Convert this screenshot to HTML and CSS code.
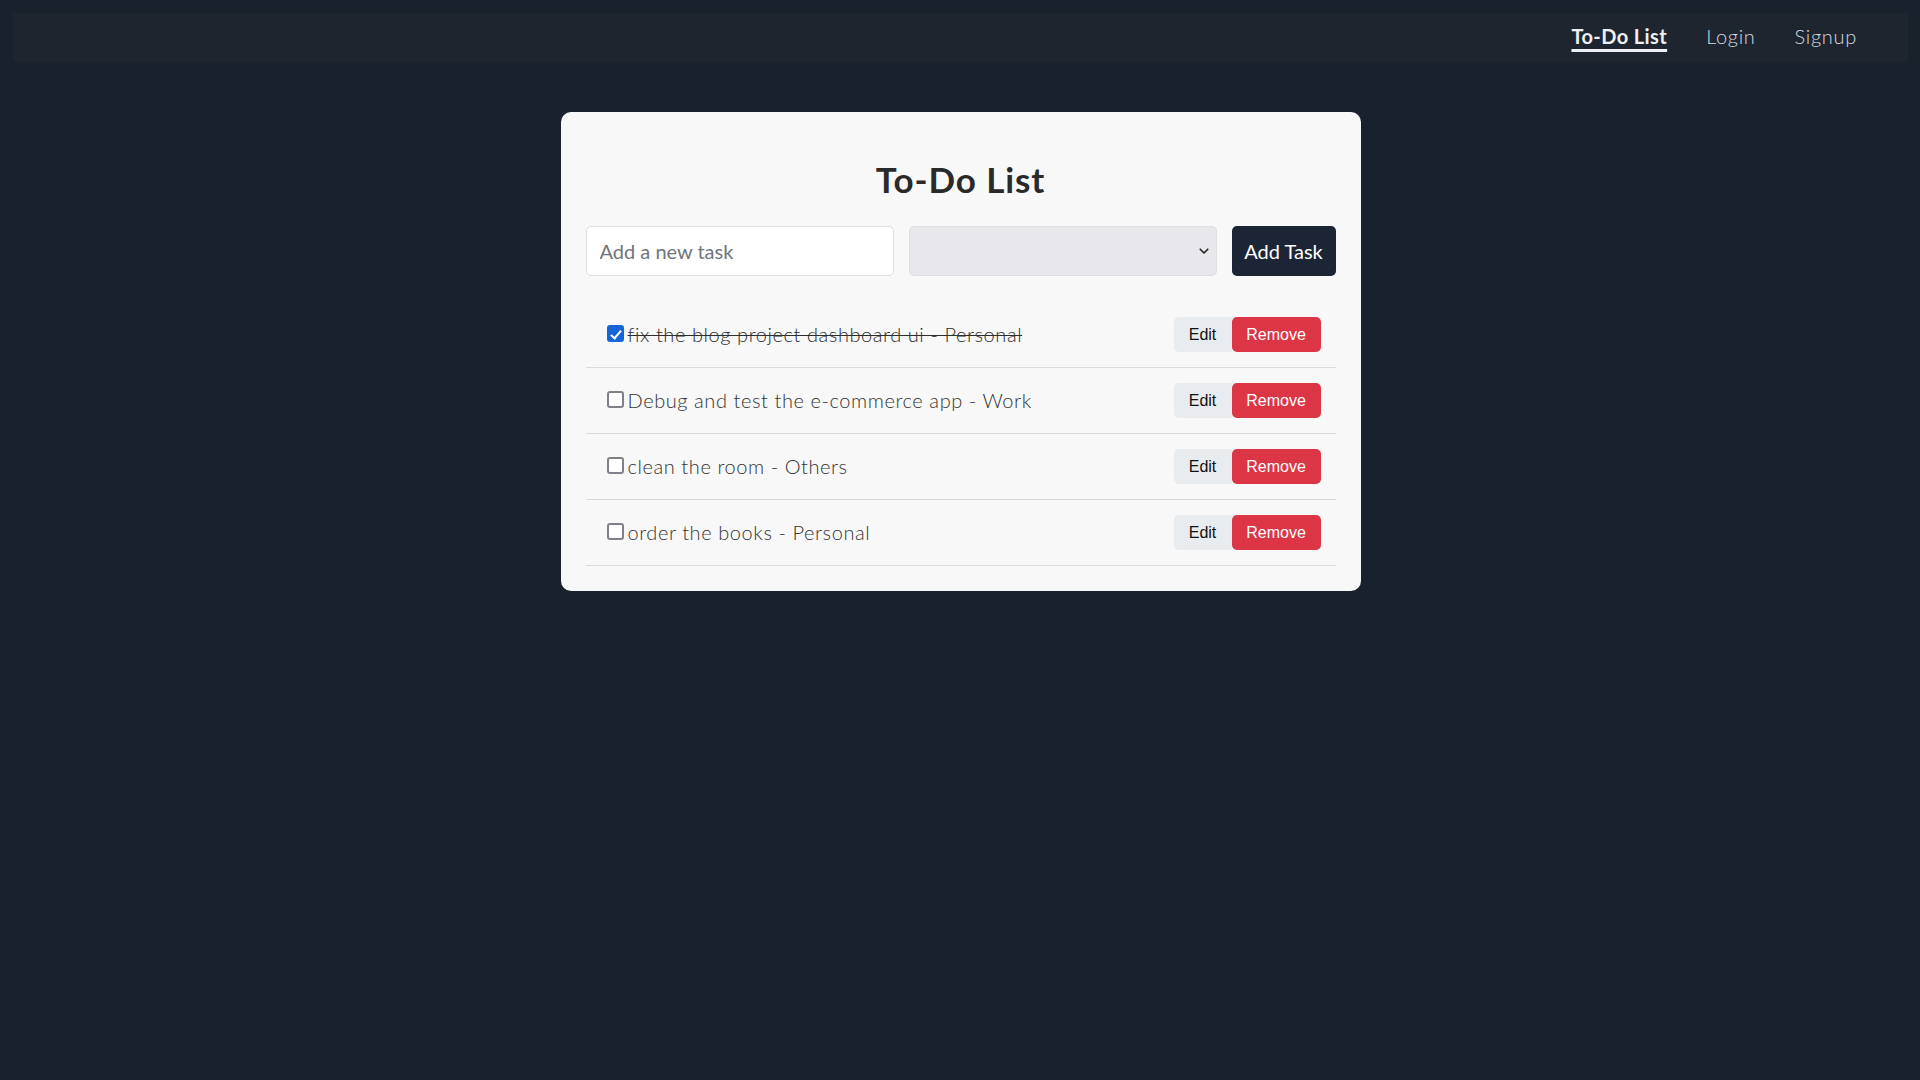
FILE: index.html
```html
<!DOCTYPE html>
<html lang="en">
<head>
<meta charset="utf-8">
<title>To-Do List</title>
<link rel="stylesheet" href="styles.css">
</head>
<body>
<nav class="navbar">
  <a class="nav-link active" href="#">To-Do List</a>
  <a class="nav-link" href="#">Login</a>
  <a class="nav-link" href="#">Signup</a>
</nav>
<main class="card">
  <h1 class="title">To-Do List</h1>
  <form class="add-form">
    <input class="task-input" type="text" placeholder="Add a new task">
    <div class="select-wrap">
      <select class="category-select">
        <option></option>
        <option>Personal</option>
        <option>Work</option>
        <option>Others</option>
      </select>
      <svg class="chevron" width="10" height="7" viewBox="0 0 10 7"><path d="M1.2 1.2 L5 5 L8.8 1.2" fill="none" stroke="#222" stroke-width="1.6" stroke-linecap="round" stroke-linejoin="round"/></svg>
    </div>
    <button class="add-btn" type="button">Add Task</button>
  </form>
  <ul class="task-list">
    <li class="task">
      <label class="task-label"><input class="check" type="checkbox" checked><span class="task-text done">fix the blog project dashboard ui - Personal</span></label>
      <div class="actions"><button class="btn edit" type="button">Edit</button><button class="btn remove" type="button">Remove</button></div>
    </li>
    <li class="task">
      <label class="task-label"><input class="check" type="checkbox"><span class="task-text">Debug and test the e-commerce app - Work</span></label>
      <div class="actions"><button class="btn edit" type="button">Edit</button><button class="btn remove" type="button">Remove</button></div>
    </li>
    <li class="task">
      <label class="task-label"><input class="check" type="checkbox"><span class="task-text">clean the room - Others</span></label>
      <div class="actions"><button class="btn edit" type="button">Edit</button><button class="btn remove" type="button">Remove</button></div>
    </li>
    <li class="task">
      <label class="task-label"><input class="check" type="checkbox"><span class="task-text">order the books - Personal</span></label>
      <div class="actions"><button class="btn edit" type="button">Edit</button><button class="btn remove" type="button">Remove</button></div>
    </li>
  </ul>
</main>
</body>
</html>
```

FILE: styles.css
```css
* { box-sizing: border-box; }

html, body {
  margin: 0;
  background: #19212d;
  min-height: 100%;
}

body {
  padding: 13px 12px 0 13px;
  font-family: Lato, "Noto Sans", sans-serif;
}

.navbar {
  height: 49px;
  background: #1f252e;
  display: flex;
  justify-content: flex-end;
  align-items: center;
  gap: 39px;
  padding-right: 51px;
}

.nav-link {
  color: #d6dbe2;
  text-decoration: none;
  font-size: 20px;
  font-weight: 300;
  line-height: 24px;
  letter-spacing: 0.7px;
  margin-top: -4px;
}

.nav-link.active {
  color: #eef0f3;
  font-weight: 700;
  letter-spacing: 0.4px;
  text-decoration: underline;
  text-decoration-thickness: 3px;
  text-underline-offset: 5px;
}

.card {
  width: 800px;
  margin: 50px auto 0;
  background: #f8f8f8;
  border-radius: 10px;
  padding: 25px;
}

.title {
  margin: 21px 0 26px;
  text-align: center;
  font-size: 35px;
  line-height: 42px;
  font-weight: 700;
  letter-spacing: 0.9px;
  color: #2a2a2a;
}

.add-form {
  display: grid;
  grid-template-columns: minmax(0, 1fr) minmax(0, 1fr) 104px;
  column-gap: 15px;
  height: 50px;
}

.task-input {
  width: 100%;
  height: 50px;
  border: 1px solid #dcdfe3;
  border-radius: 5px;
  background: #fff;
  padding: 0 13px;
  font-family: Lato, sans-serif;
  font-size: 20px;
  color: #333;
}

.task-input::placeholder { color: #6f757c; }

.select-wrap {
  position: relative;
}

.category-select {
  appearance: none;
  -webkit-appearance: none;
  display: block;
  width: 100%;
  height: 50px;
  border: 1px solid #e0e0e4;
  border-radius: 5px;
  background: #e8e8ec;
  font-size: 18px;
  padding: 0 12px;
}

.chevron {
  position: absolute;
  right: 8px;
  top: 22px;
  pointer-events: none;
}

.add-btn {
  height: 50px;
  border: none;
  border-radius: 5px;
  background: #1c2535;
  color: #fff;
  font-family: Lato, sans-serif;
  font-size: 20px;
  padding: 0;
}

.task-list {
  list-style: none;
  margin: 26px 0 0;
  padding: 0;
}

.task {
  height: 66px;
  border-bottom: 1px solid #dadada;
  display: flex;
  align-items: center;
  justify-content: space-between;
  padding: 0 15px 0 21px;
}

.task-label {
  display: flex;
  align-items: center;
  margin-top: -2px;
}

.check {
  appearance: none;
  -webkit-appearance: none;
  width: 17px;
  height: 17px;
  margin: 0 4px 0 0;
  border: 2px solid #808088;
  border-radius: 3px;
  background: #fff;
  position: relative;
}

.check:checked {
  background: #1565d8;
  border-color: #1565d8;
}

.check:checked::after {
  content: "";
  position: absolute;
  left: 4px;
  top: 0.5px;
  width: 4px;
  height: 9px;
  border: solid #fff;
  border-width: 0 2.2px 2.2px 0;
  transform: rotate(40deg);
}

.task-text {
  font-size: 20px;
  font-weight: 300;
  letter-spacing: 0.58px;
  color: #333;
}

.task-text.done {
  color: #2e2e2e;
  text-decoration: line-through;
  text-decoration-thickness: 1px;
}

.actions {
  display: flex;
}

.btn {
  height: 35px;
  border: none;
  border-radius: 5px;
  font-family: "Liberation Sans", Arial, sans-serif;
  font-size: 16px;
  padding: 0;
}

.btn.edit {
  background: #e9ecef;
  color: #111;
  border-radius: 5px 0 0 5px;
  width: 58px;
}

.btn.remove {
  background: #dc3545;
  color: #fff;
  width: 89px;
}
```
